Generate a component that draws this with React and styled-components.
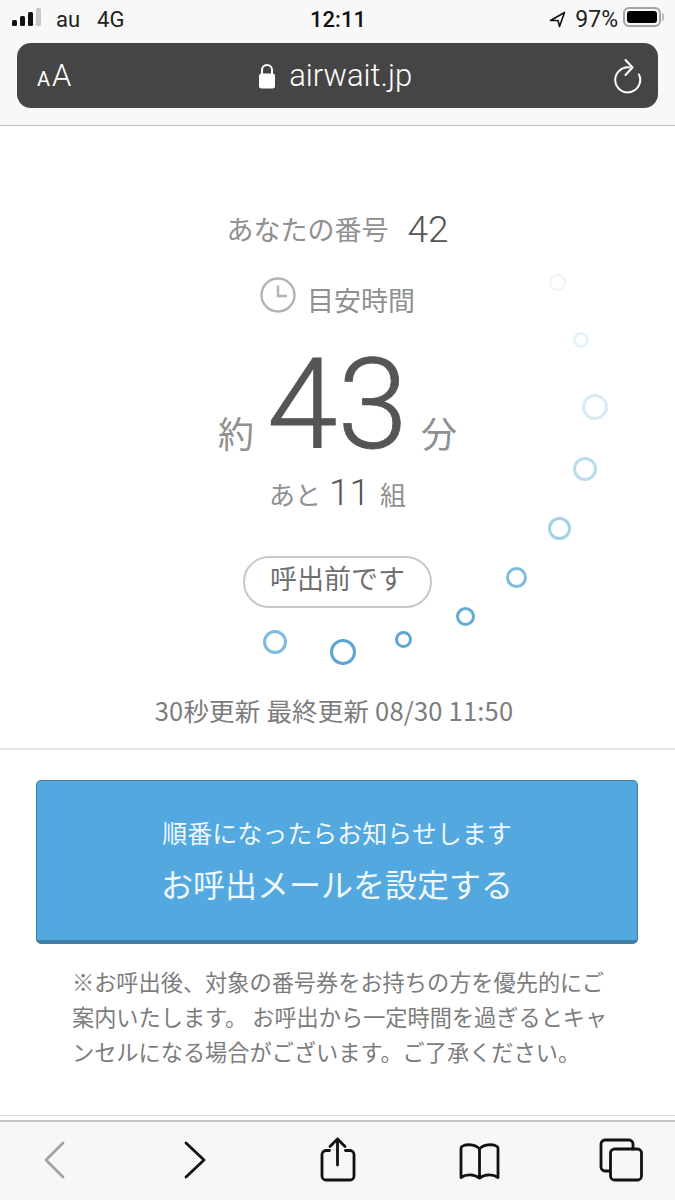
import React from 'react'
import styled, { createGlobalStyle } from 'styled-components'

const JP = '"Noto Sans CJK JP", sans-serif'
const LATIN = 'Roboto, "Noto Sans CJK JP", sans-serif'

const rings = [
  { x: 557, y: 282, d: 17, w: 2, c: '#f3f3f3' },
  { x: 581, y: 340, d: 16, w: 3, c: '#e6f2f9' },
  { x: 595, y: 407, d: 26, w: 3, c: '#d8ebf5' },
  { x: 585, y: 469, d: 24, w: 3, c: '#b9dcee' },
  { x: 559, y: 528, d: 23, w: 3, c: '#a2d0e8' },
  { x: 516, y: 577, d: 21, w: 3, c: '#7dbcdf' },
  { x: 465, y: 616, d: 19, w: 3, c: '#63acd6' },
  { x: 403, y: 639, d: 17, w: 3, c: '#5da8d2' },
  { x: 343, y: 652, d: 26, w: 3, c: '#5ba6d1' },
  { x: 275, y: 642, d: 24, w: 3, c: '#7dbbdf' },
]

export default function App() {
  return (
    <Page>
      <GlobalStyle />
      <Header>
        <StatusBar>
          <StatusLeft>
            <SignalIcon width="30" height="18" viewBox="0 0 30 18">
              <rect x="0" y="12" width="5" height="6" rx="1.5" fill="#111" />
              <rect x="8" y="8" width="5" height="10" rx="1.5" fill="#111" />
              <rect x="16" y="4" width="5" height="14" rx="1.5" fill="#111" />
              <rect x="24" y="0" width="5" height="18" rx="1.5" fill="#c8c8c8" />
            </SignalIcon>
            <Carrier>au</Carrier>
            <Carrier>4G</Carrier>
          </StatusLeft>
          <Clock>12:11</Clock>
          <StatusRight>
            <svg width="17" height="17" viewBox="0 0 17 17">
              <path d="M15.5 1.5 L1.5 9.5 L9 9.5 L10.5 15.5 Z" fill="none" stroke="#111" strokeWidth="1.6" strokeLinejoin="round" />
            </svg>
            <Percent>97%</Percent>
            <Battery>
              <BatteryFill />
            </Battery>
          </StatusRight>
        </StatusBar>
        <UrlBar>
          <TextSize>
            <SmallA>A</SmallA>A
          </TextSize>
          <Address>
            <svg width="18" height="26" viewBox="0 0 18 26">
              <path d="M4 11 V7 a5 5 0 0 1 10 0 V11" fill="none" stroke="#fff" strokeWidth="2" />
              <rect x="1" y="10.5" width="16" height="15" rx="2.5" fill="#fff" />
            </svg>
            <span>airwait.jp</span>
          </Address>
          <svg width="32" height="36" viewBox="0 0 32 36">
            <path d="M18.5 9.5 A12.5 12.5 0 1 0 28 16.5" fill="none" stroke="#fff" strokeWidth="2" strokeLinecap="round" />
            <path d="M14.5 2 L21.5 9.5 L14.5 17" fill="none" stroke="#fff" strokeWidth="2" strokeLinecap="round" strokeLinejoin="round" />
          </svg>
        </UrlBar>
      </Header>

      <Content>
        <WaitPanel>
          {rings.map(r => (
            <Ring key={r.x} $x={r.x} $y={r.y} $d={r.d} $w={r.w} $c={r.c} />
          ))}
          <NumberRow>
            あなたの番号<NumberValue>42</NumberValue>
          </NumberRow>
          <EstimateRow>
            <ClockIcon width="36" height="36" viewBox="0 0 36 36">
              <circle cx="18" cy="18" r="16.5" fill="none" stroke="#b3b3b3" strokeWidth="2.4" />
              <path d="M18 8.5 V19 H27" fill="none" stroke="#b3b3b3" strokeWidth="2.4" />
            </ClockIcon>
            <span>目安時間</span>
          </EstimateRow>
          <HeroRow>
            <HeroUnit>約</HeroUnit>
            <HeroNumber>43</HeroNumber>
            <HeroUnit>分</HeroUnit>
          </HeroRow>
          <GroupsRow>
            あと<GroupsValue>11</GroupsValue>
            <GroupsUnit>組</GroupsUnit>
          </GroupsRow>
          <StatusPill>呼出前です</StatusPill>
          <Updated>30秒更新 最終更新 08/30 11:50</Updated>
        </WaitPanel>

        <MailSection>
          <MailButton>
            <MailHint>順番になったらお知らせします</MailHint>
            <MailLabel>お呼出メールを設定する</MailLabel>
          </MailButton>
          <Note>
            ※お呼出後、対象の番号券をお持ちの方を優先的にご案内いたします。 お呼出から一定時間を過ぎるとキャンセルになる場合がございます。ご了承ください。
          </Note>
        </MailSection>
      </Content>

      <Toolbar>
        <ToolIcon viewBox="0 0 44 44">
          <path d="M30 5 L13 22 L30 39" stroke="#a3a3a3" />
        </ToolIcon>
        <ToolIcon viewBox="0 0 44 44">
          <path d="M12 5 L30 22 L12 39" stroke="#111" />
        </ToolIcon>
        <ToolIcon viewBox="0 0 44 44">
          <path d="M13.5 12.5 H10 a4 4 0 0 0 -4 4 V38 a4 4 0 0 0 4 4 H34 a4 4 0 0 0 4 -4 V16.5 a4 4 0 0 0 -4 -4 H29.5" stroke="#111" />
          <path d="M21.5 27 V1 M14 8.5 L21.5 1 L29 8.5" stroke="#111" />
        </ToolIcon>
        <ToolIcon viewBox="0 0 44 44">
          <path d="M22.5 11 C19 6.5 9 5.5 5 8.5 a2 2 0 0 0 -1 2 V39.5 C9 36 17 36 22.5 40 C28 36 36 36 41 39.5 V10.5 a2 2 0 0 0 -1 -2 C36 5.5 26 6.5 22.5 11 Z M22.5 11 V40" stroke="#111" />
        </ToolIcon>
        <ToolIcon viewBox="0 0 44 44">
          <path d="M12 33 H7 a4 4 0 0 1 -4 -4 V6 a4 4 0 0 1 4 -4 H31 a4 4 0 0 1 4 4 V11" stroke="#111" />
          <rect x="12.5" y="11" width="31" height="31" rx="4" stroke="#111" />
        </ToolIcon>
      </Toolbar>
    </Page>
  )
}

const GlobalStyle = createGlobalStyle`
  html, body {
    margin: 0;
    padding: 0;
    background: #fff;
  }
`

const Page = styled.div`
  width: 675px;
  height: 1200px;
  display: flex;
  flex-direction: column;
  overflow: hidden;
  font-family: ${JP};
  color: #777;
`

const Header = styled.header`
  height: 126px;
  box-sizing: border-box;
  background: #f8f8f8;
  border-bottom: 1px solid #c4c4c4;
  flex: none;
`

const StatusBar = styled.div`
  height: 43px;
  padding: 0 11px 5px 12px;
  box-sizing: border-box;
  display: grid;
  grid-template-columns: 1fr auto 1fr;
  align-items: center;
  color: #222;
`

const StatusLeft = styled.div`
  display: flex;
  align-items: center;
  gap: 14px;
`

const SignalIcon = styled.svg`
  margin-bottom: 4px;
`

const Carrier = styled.span`
  font: 400 22px ${LATIN};
  &:first-of-type {
    margin-right: 3px;
  }
`

const Clock = styled.span`
  font: 500 22px ${LATIN};
  color: #111;
`

const StatusRight = styled.div`
  display: flex;
  align-items: center;
  justify-content: flex-end;
  gap: 9px;
`

const Percent = styled.span`
  font: 400 23px ${LATIN};
  margin-right: -4px;
`

const Battery = styled.div`
  position: relative;
  width: 38px;
  height: 20px;
  margin: 0 3px 4px 0;
  box-sizing: border-box;
  border: 2px solid #a4a4a4;
  border-radius: 6px;
  padding: 2px;

  &::after {
    content: '';
    position: absolute;
    right: -5px;
    top: 4px;
    width: 2px;
    height: 8px;
    background: #bbb;
    border-radius: 0 2px 2px 0;
  }
`

const BatteryFill = styled.div`
  height: 100%;
  background: #000;
  border-radius: 3px;
`

const UrlBar = styled.div`
  height: 65px;
  margin: 0 17px;
  padding: 0 15px 0 20px;
  border-radius: 14px;
  background: #454545;
  color: #fff;
  display: flex;
  align-items: center;
  justify-content: space-between;
`

const TextSize = styled.span`
  font: 300 31px ${LATIN};
`

const SmallA = styled.span`
  font-size: 20px;
  font-weight: 400;
  margin-right: 2px;
`

const Address = styled.div`
  display: flex;
  align-items: center;
  gap: 13px;
  margin-right: 12px;
  font: 300 31px ${LATIN};
`

const Content = styled.main`
  flex: 1;
  background: #fff;
`

const WaitPanel = styled.section`
  position: relative;
  height: 624px;
  box-sizing: border-box;
  padding-top: 82px;
  border-bottom: 2px solid #e4e4e4;
  display: flex;
  flex-direction: column;
  align-items: center;
`

const Ring = styled.span`
  position: absolute;
  left: ${p => p.$x - p.$d / 2}px;
  top: ${p => p.$y - 126 - p.$d / 2}px;
  width: ${p => p.$d}px;
  height: ${p => p.$d}px;
  box-sizing: border-box;
  border: ${p => p.$w}px solid ${p => p.$c};
  border-radius: 50%;
`

const NumberRow = styled.div`
  height: 40px;
  display: flex;
  align-items: center;
  font-size: 27px;
  color: #909090;
`

const NumberValue = styled.span`
  margin-left: 19px;
  padding-top: 3px;
  font: 300 37px/40px ${LATIN};
  color: #555;
`

const EstimateRow = styled.div`
  height: 40px;
  margin-top: 31px;
  display: flex;
  align-items: center;
  gap: 11px;
  font-size: 27px;
  color: #909090;
`

const ClockIcon = styled.svg`
  margin-bottom: 9px;
`

const HeroRow = styled.div`
  height: 120px;
  margin-top: 26px;
  display: flex;
  align-items: baseline;
  gap: 13px;
`

const HeroNumber = styled.span`
  font: 300 127px/120px ${LATIN};
  color: #555;
  -webkit-text-stroke: 0.8px #555;
`

const HeroUnit = styled.span`
  font-size: 36px;
  line-height: 40px;
  color: #909090;
`

const GroupsRow = styled.div`
  height: 40px;
  margin-top: 8px;
  display: flex;
  align-items: baseline;
  font-size: 26px;
  line-height: 40px;
  color: #909090;
`

const GroupsValue = styled.span`
  margin: 0 10px 0 8px;
  font: 300 37px/40px ${LATIN};
  color: #555;
`

const GroupsUnit = styled.span`
  font-size: 26px;
`

const StatusPill = styled.div`
  width: 189px;
  height: 52px;
  margin-top: 43px;
  padding-bottom: 10px;
  box-sizing: border-box;
  border: 2px solid #c8c8c8;
  border-radius: 26px;
  display: flex;
  align-items: center;
  justify-content: center;
  font-size: 27px;
  color: #707070;
`

const Updated = styled.div`
  margin: 87px 7px 0 0;
  height: 30px;
  line-height: 30px;
  font-size: 25.5px;
  letter-spacing: 0.2px;
  color: #7c7c7c;
`

const MailSection = styled.section`
  padding: 30px 37px 0 36px;
`

const MailButton = styled.div`
  height: 164px;
  box-sizing: border-box;
  padding-top: 33px;
  background: #53a8df;
  border: 1.5px solid #437fa5;
  border-bottom-width: 4px;
  border-radius: 5px;
  color: #eef7fc;
  text-align: center;
`

const MailHint = styled.div`
  font-size: 25px;
  line-height: 36px;
`

const MailLabel = styled.div`
  margin-top: 10px;
  font-size: 32px;
  line-height: 46px;
`

const Note = styled.p`
  margin: 20px 0 0;
  padding: 0 30px 0 36px;
  font-size: 22.2px;
  line-height: 35px;
  color: #7c7c7c;
`

const Toolbar = styled.nav`
  height: 80px;
  flex: none;
  box-sizing: border-box;
  padding: 16px 33px 0;
  background: #f5f7f9;
  border-top: 2px solid #c4c4c4;
  box-shadow: 0 -4px 0 #fff, 0 -5px 0 #e0e0e0;
  display: flex;
  justify-content: space-between;
  align-items: flex-start;
`

const ToolIcon = styled.svg`
  width: 44px;
  height: 44px;
  overflow: visible;
  fill: none;
  stroke-width: 2.8;
  stroke-linecap: round;
  stroke-linejoin: round;
`
